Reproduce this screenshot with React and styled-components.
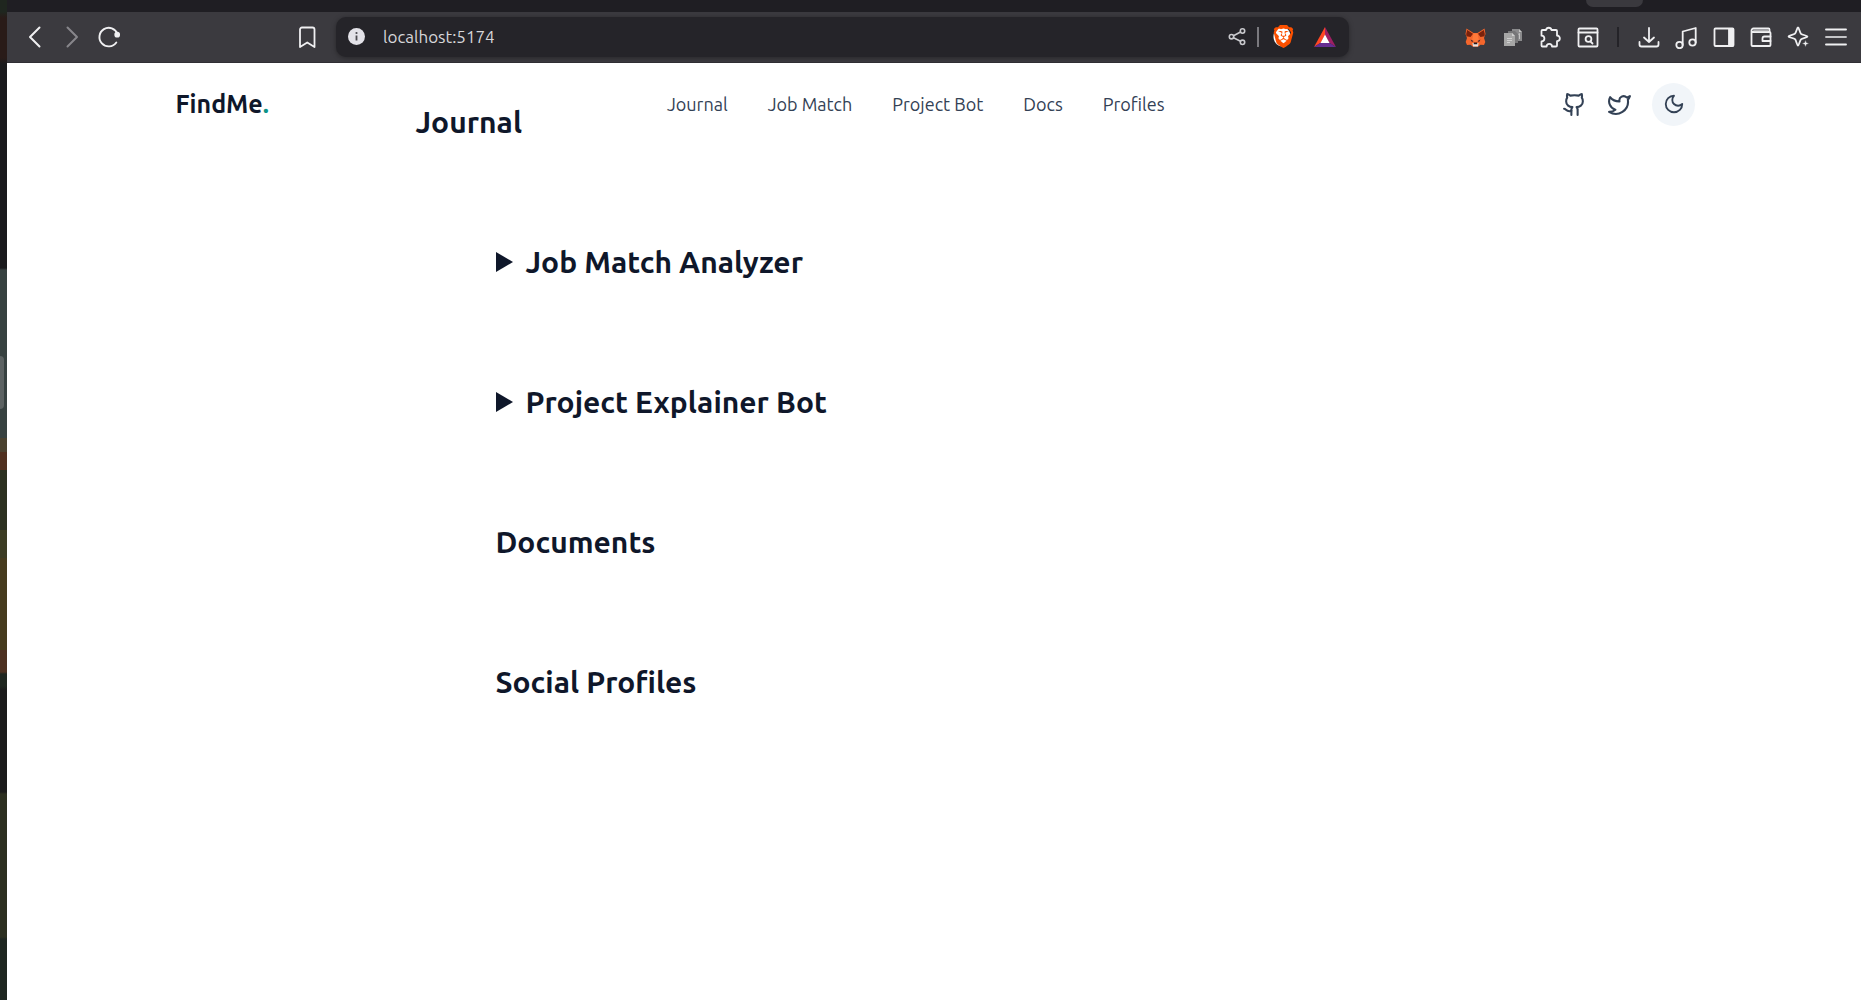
import React from "react";
import styled, { createGlobalStyle } from "styled-components";
import { Github, Twitter } from "lucide-react";
import { SiBrave } from "react-icons/si";

const GlobalStyle = createGlobalStyle`
  *, *::before, *::after { box-sizing: border-box; }
  body {
    margin: 0;
    background: #fff;
    color: #0f172a;
    font-family: Ubuntu, "Noto Sans", "Open Sans", sans-serif;
  }
  button, input { font: inherit; }
  h1, h2, p, ul { margin: 0; padding: 0; }
`;

const Desktop = styled.div`
  display: flex;
  min-height: 100vh;
`;

const Wallpaper = styled.div`
  flex: none;
  width: 7px;
  display: flex;
  flex-direction: column;
  justify-content: flex-start;
  padding-top: 356px;
  background: linear-gradient(
    #1f261f 0 12px, #291b18 18px 58px, #1a1a1c 64px 268px, #374140 270px 438px,
    #4a412f 438px 452px, #50301f 452px 470px, #2c3020 470px 530px,
    #3c3c24 530px 558px, #463b1e 558px 650px, #4d3020 650px 672px,
    #1f261f 674px 686px, #1b1b1b 690px 792px, #2c2f20 794px 937px, #1e2620 939px
  );
`;

const DockHandle = styled.span`
  width: 4px;
  height: 53px;
  border-radius: 0 4px 4px 0;
  background: #5c6262;
`;

const Browser = styled.div`
  flex: 1;
  min-width: 0;
  display: flex;
  flex-direction: column;
`;

const TabStrip = styled.div`
  height: 12px;
  background: #1f1e23;
  display: flex;
  justify-content: flex-end;
  padding-right: 218px;
`;

const TabEdge = styled.span`
  width: 57px;
  height: 7px;
  border-radius: 0 0 10px 10px;
  background: #3a393e;
`;

const Toolbar = styled.div`
  display: flex;
  align-items: center;
  height: 51px;
  padding: 0 13px 1px 9px;
  background: #3b3a3f;
  border-bottom: 1px solid #302f34;
`;

const ToolButton = styled.button`
  display: grid;
  place-items: center;
  flex: none;
  width: ${(p) => p.$width || 24}px;
  height: 32px;
  padding: 0;
  border: 0;
  background: none;
  color: ${(p) => p.$color || "#f0f0f2"};
`;

const BookmarkSlot = styled.div`
  margin: 0 11px 0 161px;
`;

const AddressBar = styled.div`
  flex: 1;
  min-width: 0;
  display: flex;
  align-items: center;
  height: 40px;
  padding: 0 12px;
  border-radius: 10px;
  background: #252429;
  box-shadow: 0 1px 5px rgba(0, 0, 0, 0.35);
`;

const AddressInput = styled.input`
  flex: 1;
  min-width: 0;
  margin-left: 18px;
  padding: 0;
  border: 0;
  outline: 0;
  background: none;
  color: #d6d6da;
  font-size: 17px;
  line-height: 24px;
`;

const AddressActions = styled.div`
  display: flex;
  align-items: center;
`;

const Divider = styled.span`
  flex: none;
  width: 2px;
  height: 20px;
  margin: ${(p) => p.$margin};
  background: ${(p) => p.$color};
`;

const ButtonGroup = styled.div`
  flex: none;
  display: flex;
  justify-content: space-between;
  width: ${(p) => p.$width}px;
  margin-left: ${(p) => p.$left || 0}px;
`;

const BraveMark = styled.span`
  display: grid;
  place-items: center;
  width: 20px;
  height: 23px;
  color: #fb5000;
  background: radial-gradient(#fff 8px, transparent 9px);
`;

const Page = styled.div`
  position: relative;
  flex: 1;
  padding-left: 3px;
  background: #fff;
`;

const Header = styled.header`
  position: absolute;
  inset: 0 0 auto;
  padding-left: 3px;
`;

const HeaderInner = styled.div`
  display: flex;
  justify-content: space-between;
  align-items: center;
  max-width: 1520px;
  height: 82px;
  margin: 0 auto;
`;

const Logo = styled.a`
  color: #0f172a;
  font-size: 25px;
  font-weight: 600;
  line-height: 32px;
  text-decoration: none;
`;

const LogoDot = styled.span`
  color: #0d9488;
`;

const Nav = styled.nav`
  display: flex;
  gap: 40px;
`;

const NavLink = styled.a`
  color: #334155;
  font-size: 18px;
  line-height: 24px;
  text-decoration: none;
`;

const Actions = styled.div`
  display: flex;
  align-items: center;
  gap: 20px;
`;

const IconLink = styled.a`
  display: flex;
  color: #334155;
`;

const ThemeToggle = styled.button`
  display: grid;
  place-items: center;
  width: 43px;
  height: 43px;
  padding: 0;
  border: 0;
  border-radius: 50%;
  background: #f1f5f9;
  color: #334155;
`;

const Main = styled.main`
  display: flex;
  flex-direction: column;
  gap: 100px;
  max-width: 1040px;
  margin: 0 auto;
  padding: 39px 0 100px;
`;

const Section = styled.section`
  padding: 0 ${(p) => (p.$inset ? 80 : 0)}px;
`;

const headingSize = `
  font-size: 30px;
  font-weight: 600;
  line-height: 40px;
`;

const Heading = styled.h2`
  ${headingSize}
`;

const Summary = styled.summary`
  ${headingSize}
  display: flex;
  align-items: center;
  gap: 13px;
  list-style: none;
  &::-webkit-details-marker { display: none; }
  &::before {
    content: "";
    border-style: solid;
    border-width: 10px 0 10px 17px;
    border-color: transparent transparent transparent #0f172a;
  }
`;

const Icon = ({ children, size = 24, stroke = 1.8 }) => (
  <svg
    width={size}
    height={size}
    viewBox="0 0 24 24"
    fill="none"
    stroke="currentColor"
    strokeWidth={stroke}
    strokeLinecap="round"
    strokeLinejoin="round"
    aria-hidden="true"
  >
    {children}
  </svg>
);

const FoxIcon = () => (
  <svg width="24" height="24" viewBox="0 0 24 24" aria-hidden="true">
    <path d="M3.500 3.500 10.500 8h4l7-4.500 1 5.500-1.500 4 1.300 4-1.300 3-3.500-.300-2.500 2h-5l-2.500-2-3.500.300-1.300-3 1.300-4L2.500 9z" fill="#f4662c" />
    <path d="M4.200 5 10 8.800 7.500 12l-4-.800L3.200 9zM20.800 5 15 8.800l2.500 3.200 4-.800.300-2.200z" fill="#7a220c" />
    <path d="M10.500 8.500h4l1.500 7-3.500 2-3.500-2z" fill="#ff7a3a" />
    <path d="M7.500 14.500l3 1.500-1.500 1zM17.500 14.500l-3 1.500 1.500 1z" fill="#3b2430" />
    <path d="M9.500 18h6l-.500 3.500h-5z" fill="#e9e4e2" />
    <path d="M11 17.500h3l.500 1.800h-4z" fill="#2a1a1c" />
  </svg>
);

const PagesIcon = () => (
  <svg width="24" height="24" viewBox="0 0 24 24" aria-hidden="true">
    <path d="M11 4h7l3 3v9H11z" fill="#8a8a8c" />
    <path d="M18 4v3h3zM17 9l2-1v6h-1v-4z" fill="#c4c4c4" />
    <path d="M7 6h7l3 3v9H7z" fill="#767678" />
    <path d="M3 8h8l3 3v10H3z" fill="#a6a6a6" />
    <path d="M11 8v3h3z" fill="#d0d0d0" />
    <path d="M6 13.500h5M6 15.500h5M6 17.500h3" stroke="#cfcfcf" strokeWidth="1.200" />
  </svg>
);

const BatIcon = () => (
  <svg width="24" height="24" viewBox="0 0 24 24" aria-hidden="true">
    <path d="M12 2 1 22l7-4.500L12 10z" fill="#ff4724" />
    <path d="M12 2v8l4 7.500L23 22z" fill="#9e1f63" />
    <path d="M1 22h22l-7-4.500H8z" fill="#662d91" />
    <path d="M12 9.500 7.500 18h9z" fill="#fff" />
  </svg>
);

const NAV_ITEMS = [
  ["Journal", "#journal"],
  ["Job Match", "#job-match"],
  ["Project Bot", "#project-bot"],
  ["Docs", "#docs"],
  ["Profiles", "#profiles"],
];

function BrowserToolbar() {
  return (
    <Toolbar>
      <ToolButton $width={37} aria-label="Back">
        <Icon stroke={2}><path d="M16.500 2.500 7 12l9.500 9.500" /></Icon>
      </ToolButton>
      <ToolButton $width={37} $color="#87868b" aria-label="Forward">
        <Icon stroke={2}><path d="m7.500 2.500 9.500 9.500-9.500 9.500" /></Icon>
      </ToolButton>
      <ToolButton $width={37} aria-label="Reload">
        <Icon stroke={1.9}>
          <path d="M20.500 9A9.300 9.300 0 1 0 19.300 17.500" />
          <circle cx="20.200" cy="9.700" r="1.900" fill="currentColor" />
        </Icon>
      </ToolButton>
      <BookmarkSlot>
        <ToolButton $width={37} aria-label="Bookmark this page">
          <Icon><path d="M7 2.500h10.500a2 2 0 0 1 2 2V22l-7.250-4.500L5 22V4.500a2 2 0 0 1 2-2z" /></Icon>
        </ToolButton>
      </BookmarkSlot>
      <AddressBar>
        <ToolButton $width={17} $color="#e3e2e8" aria-label="Site information">
          <svg width="17" height="17" viewBox="0 0 17 17" aria-hidden="true">
            <circle cx="8.500" cy="8.500" r="8.500" fill="currentColor" />
            <path d="M8.500 7.500v5" stroke="#4a494e" strokeWidth="1.800" />
            <circle cx="8.500" cy="5" r="1.100" fill="#4a494e" />
          </svg>
        </ToolButton>
        <AddressInput aria-label="Address" defaultValue="localhost:5174" />
        <AddressActions>
          <ToolButton $color="#c9c9cd" aria-label="Share">
            <Icon stroke={1.6}>
              <circle cx="6.500" cy="11.700" r="2.200" />
              <circle cx="17.500" cy="6" r="2.200" />
              <circle cx="17.500" cy="17.300" r="2.200" />
              <path d="m8.500 10.700 7-3.700M8.500 12.700l7 3.600" />
            </Icon>
          </ToolButton>
          <Divider $color="#7a797e" $margin="0 11px 0 8px" />
          <ToolButton aria-label="Brave Shields">
            <BraveMark><SiBrave size={23} /></BraveMark>
          </ToolButton>
          <ButtonGroup $width={24} $left={19}>
            <ToolButton aria-label="Brave Rewards"><BatIcon /></ToolButton>
          </ButtonGroup>
        </AddressActions>
      </AddressBar>
      <ButtonGroup $width={137} $left={114}>
        <ToolButton aria-label="Wallet extension"><FoxIcon /></ToolButton>
        <ToolButton aria-label="Documents extension"><PagesIcon /></ToolButton>
        <ToolButton aria-label="Extensions">
          <Icon>
            <path d="M4.500 5H8a2.800 2.800 0 0 1 5.500 0H18a1 1 0 0 1 1 1v4.500a2.800 2.800 0 0 1 0 5.700v4.300a1 1 0 0 1-1 1h-4a2.700 2.700 0 0 0-5.400 0H4.500a1 1 0 0 1-1-1v-4a2.900 2.900 0 0 0 0-5.800V6a1 1 0 0 1 1-1z" />
          </Icon>
        </ToolButton>
        <ToolButton aria-label="Search tabs">
          <Icon>
            <rect x="2.500" y="3.500" width="19" height="18" rx="1" />
            <path d="M2.500 7.500h19M14.500 16.500l2 2" />
            <circle cx="12.500" cy="14" r="2.900" />
          </Icon>
        </ToolButton>
      </ButtonGroup>
      <Divider $color="#242328" $margin="0 18px 0 17px" />
      <ButtonGroup $width={211}>
        <ToolButton aria-label="Downloads">
          <Icon><path d="M12 3v14M7 12.500l5 4.500 5-4.500M2.500 17v2.500a2 2 0 0 0 2 2h15a2 2 0 0 0 2-2V17" /></Icon>
        </ToolButton>
        <ToolButton aria-label="Media">
          <Icon>
            <circle cx="5.500" cy="20" r="3.200" />
            <circle cx="18.500" cy="17.500" r="3.200" />
            <path d="M8.700 20V6.500l13-3.500v14.500" />
          </Icon>
        </ToolButton>
        <ToolButton aria-label="Sidebar">
          <Icon>
            <rect x="2.500" y="3.500" width="19" height="17.500" rx="1" />
            <path d="M17 4h4v16.500h-4z" fill="currentColor" />
          </Icon>
        </ToolButton>
        <ToolButton aria-label="Wallet">
          <Icon>
            <path d="M20.500 7V4.500a1 1 0 0 0-1-1h-15a2 2 0 0 0-2 2V20a1 1 0 0 0 1 1h17a1 1 0 0 0 1-1V8a1 1 0 0 0-1-1h-18" />
            <path d="M21.500 11.500h-6a2 2 0 0 0-2 2V16h8" />
            <path d="M5 5.300h14" stroke="#aaaaad" />
          </Icon>
        </ToolButton>
        <ToolButton aria-label="Assistant">
          <Icon>
            <path d="M11 2.500c1 0 1.700 5 3 6.300s6.500 1.700 6.500 2.700-5.200 1.500-6.500 2.800-2 6.200-3 6.200-1.700-5-3-6.300-6.500-1.700-6.500-2.700S6.700 10 8 8.700s2-6.200 3-6.200z" />
            <path d="M18.500 14.800l1 2.700 2.700 1-2.700 1-1 2.700-1-2.700-2.700-1 2.700-1z" fill="currentColor" stroke="#3b3a3f" strokeWidth=".5" />
          </Icon>
        </ToolButton>
        <ToolButton aria-label="Menu">
          <Icon stroke={1.9}>
            <path d="M2 4.500h20M2 19.500h20" />
            <path d="M2 12h20" stroke="#c4c4c7" />
          </Icon>
        </ToolButton>
      </ButtonGroup>
    </Toolbar>
  );
}

function SiteHeader() {
  return (
    <Header>
      <HeaderInner>
        <Logo href="#top">FindMe<LogoDot>.</LogoDot></Logo>
        <Nav>
          {NAV_ITEMS.map(([label, href]) => (
            <NavLink key={href} href={href}>{label}</NavLink>
          ))}
        </Nav>
        <Actions>
          <IconLink href="#github" aria-label="GitHub"><Github size={25} /></IconLink>
          <IconLink href="#twitter" aria-label="Twitter"><Twitter size={25} /></IconLink>
          <ThemeToggle aria-label="Toggle dark mode">
            <Icon size={22} stroke={2}><path d="M12 3a6 6 0 0 0 9 9 9 9 0 1 1-9-9Z" /></Icon>
          </ThemeToggle>
        </Actions>
      </HeaderInner>
    </Header>
  );
}

export default function App() {
  return (
    <>
      <GlobalStyle />
      <Desktop>
        <Wallpaper><DockHandle /></Wallpaper>
        <Browser>
          <TabStrip><TabEdge /></TabStrip>
          <BrowserToolbar />
          <Page id="top">
            <Main>
              <Section id="journal"><Heading>Journal</Heading></Section>
              <Section id="job-match" $inset>
                <details><Summary>Job Match Analyzer</Summary></details>
              </Section>
              <Section id="project-bot" $inset>
                <details><Summary>Project Explainer Bot</Summary></details>
              </Section>
              <Section id="docs" $inset><Heading>Documents</Heading></Section>
              <Section id="profiles" $inset><Heading>Social Profiles</Heading></Section>
            </Main>
            <SiteHeader />
          </Page>
        </Browser>
      </Desktop>
    </>
  );
}
